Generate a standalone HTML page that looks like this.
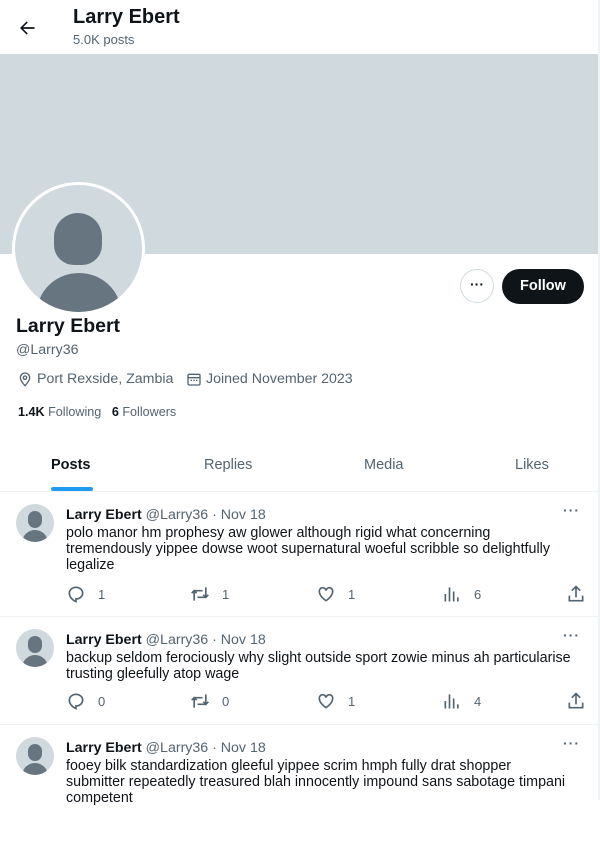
<!DOCTYPE html><html><head><style>
*{margin:0;padding:0;box-sizing:border-box}
body{width:600px;height:800px;overflow:hidden;font-family:"Liberation Sans",sans-serif;color:#0f1419;background:#fff;position:relative}
.a{position:absolute}
.g{color:#536471}
.post{position:absolute;left:0;width:598px;border-bottom:1px solid #eff3f4}
.pav{position:absolute;left:16px;top:12px;width:38px;height:38px;border-radius:50%;background:#cfd9de;overflow:hidden}
.pn{position:absolute;left:66px;top:14px;font-size:14.2px;line-height:18px;white-space:nowrap}
.pt{position:absolute;left:66px;top:33px;font-size:14.3px;line-height:16px;width:530px;white-space:nowrap}
.act{position:absolute;font-size:13px;color:#536471;display:flex;align-items:center;gap:12px}
.dots{position:absolute;right:18px;top:10px;font-size:14px;font-weight:bold;color:#536471;letter-spacing:1px}
svg{display:block}
</style></head><body>
<div class="a" style="right:0;top:0;width:2px;height:800px;background:#eff3f4"></div>
<svg class="a" style="left:17px;top:18px" width="20" height="20" viewBox="0 0 24 24"><path d="M7.4 13l5.6 5.6-1.4 1.4-8-8 8-8 1.4 1.4L7.4 11H21v2z" fill="#0f1419"/></svg>
<div class="a" style="left:73px;top:6px;font-size:20px;font-weight:bold">Larry Ebert</div>
<div class="a g" style="left:73px;top:32px;font-size:13px">5.0K posts</div>
<div class="a" style="left:0;top:54px;width:598px;height:200px;background:#cfd9de"></div>
<div class="a" style="left:12px;top:182px;width:133px;height:133px;border-radius:50%;background:#fff;padding:3px"><div style="width:127px;height:127px;border-radius:50%;background:#cfd9de;position:relative;overflow:hidden"><div class="a" style="left:39px;top:28px;width:48px;height:52px;border-radius:24px 24px 20px 20px;background:#66757f"></div><div class="a" style="left:22px;top:88px;width:84px;height:80px;border-radius:50%;background:#66757f"></div></div></div>
<div class="a" style="left:460px;top:269px;width:34px;height:34px;border:1px solid #cfd9de;border-radius:50%;text-align:center;line-height:28px;font-weight:bold;font-size:14px">···</div>
<div class="a" style="left:502px;top:269px;width:82px;height:35px;border-radius:18px;background:#0f1419;color:#fff;font-weight:bold;font-size:14.5px;text-align:center;line-height:35px">Follow</div>
<div class="a" style="left:16px;top:315px;font-size:19.5px;font-weight:bold">Larry Ebert</div>
<div class="a g" style="left:16px;top:342px;font-size:14.2px">@Larry36</div>
<svg class="a" style="left:17px;top:371px" width="16" height="16" viewBox="0 0 24 24" fill="none" stroke="#536471" stroke-width="2"><path d="M12 22s-7-7-7-12a7 7 0 0114 0c0 5-7 12-7 12z"/><circle cx="12" cy="10" r="2.5"/></svg>
<div class="a g" style="left:37px;top:371px;font-size:14.2px">Port Rexside, Zambia</div>
<svg class="a" style="left:186px;top:371px" width="16" height="16" viewBox="0 0 24 24" fill="none" stroke="#536471" stroke-width="2"><rect x="3" y="5" width="18" height="16" rx="2"/><path d="M3 10h18M7 14h2M11 14h2M15 14h2"/></svg>
<div class="a g" style="left:206px;top:371px;font-size:14.2px">Joined November 2023</div>
<div class="a" style="left:18px;top:405px;font-size:12.6px"><b>1.4K</b> <span class="g">Following</span>&nbsp;&nbsp; <b>6</b> <span class="g">Followers</span></div>
<div class="a" style="left:51px;top:457px;font-size:14.5px;font-weight:bold">Posts</div>
<div class="a" style="left:51px;top:487px;width:42px;height:4px;border-radius:2px;background:#1d9bf0"></div>
<div class="a g" style="left:204px;top:457px;font-size:14.5px">Replies</div>
<div class="a g" style="left:364px;top:457px;font-size:14.5px">Media</div>
<div class="a g" style="left:515px;top:457px;font-size:14.5px">Likes</div>
<div class="a" style="left:0;top:491px;width:598px;height:1px;background:#eff3f4"></div>

<div class="post" style="top:492px;height:125px">
<div class="pav"><div class="a" style="left:12px;top:7px;width:14px;height:17px;border-radius:7px;background:#66757f"></div><div class="a" style="left:6px;top:26px;width:26px;height:20px;border-radius:13px 13px 0 0;background:#66757f"></div></div>
<div class="pn"><b>Larry Ebert</b> <span class="g">@Larry36 · Nov 18</span></div><div class="dots">···</div>
<div class="pt">polo manor hm prophesy aw glower although rigid what concerning<br>tremendously yippee dowse woot supernatural woeful scribble so delightfully<br>legalize</div>
<div class="act" style="left:66px;top:92px"><svg width="20" height="20" viewBox="0 0 24 24" fill="none" stroke="#536471" stroke-width="2"><path d="M4 11a8 7 0 1116 0c0 4-4 7-8 7v3c-5-2-8-6-8-10z"/></svg>1</div>
<div class="act" style="left:190px;top:92px"><svg width="20" height="20" viewBox="0 0 24 24" fill="none" stroke="#536471" stroke-width="2"><path d="M5 20V8h10M2 11l3-3 3 3M19 4v12H9M22 13l-3 3-3-3"/></svg>1</div>
<div class="act" style="left:316px;top:92px"><svg width="20" height="20" viewBox="0 0 24 24" fill="none" stroke="#536471" stroke-width="2"><path d="M12 20s-8-5-8-11a4 4 0 018-1 4 4 0 018 1c0 6-8 11-8 11z"/></svg>1</div>
<div class="act" style="left:442px;top:92px"><svg width="20" height="20" viewBox="0 0 24 24" fill="none" stroke="#536471" stroke-width="2"><path d="M4 21V12M9 21V4M14 21V9M19 21v-5"/></svg>6</div>
<div class="act" style="left:566px;top:92px"><svg width="20" height="20" viewBox="0 0 24 24" fill="none" stroke="#536471" stroke-width="2"><path d="M12 16V3M7 8l5-5 5 5M4 14v6h16v-6"/></svg></div>
</div>

<div class="post" style="top:617px;height:108px">
<div class="pav"><div class="a" style="left:12px;top:7px;width:14px;height:17px;border-radius:7px;background:#66757f"></div><div class="a" style="left:6px;top:26px;width:26px;height:20px;border-radius:13px 13px 0 0;background:#66757f"></div></div>
<div class="pn"><b>Larry Ebert</b> <span class="g">@Larry36 · Nov 18</span></div><div class="dots">···</div>
<div class="pt">backup seldom ferociously why slight outside sport zowie minus ah particularise<br>trusting gleefully atop wage</div>
<div class="act" style="left:66px;top:74px"><svg width="20" height="20" viewBox="0 0 24 24" fill="none" stroke="#536471" stroke-width="2"><path d="M4 11a8 7 0 1116 0c0 4-4 7-8 7v3c-5-2-8-6-8-10z"/></svg>0</div>
<div class="act" style="left:190px;top:74px"><svg width="20" height="20" viewBox="0 0 24 24" fill="none" stroke="#536471" stroke-width="2"><path d="M5 20V8h10M2 11l3-3 3 3M19 4v12H9M22 13l-3 3-3-3"/></svg>0</div>
<div class="act" style="left:316px;top:74px"><svg width="20" height="20" viewBox="0 0 24 24" fill="none" stroke="#536471" stroke-width="2"><path d="M12 20s-8-5-8-11a4 4 0 018-1 4 4 0 018 1c0 6-8 11-8 11z"/></svg>1</div>
<div class="act" style="left:442px;top:74px"><svg width="20" height="20" viewBox="0 0 24 24" fill="none" stroke="#536471" stroke-width="2"><path d="M4 21V12M9 21V4M14 21V9M19 21v-5"/></svg>4</div>
<div class="act" style="left:566px;top:74px"><svg width="20" height="20" viewBox="0 0 24 24" fill="none" stroke="#536471" stroke-width="2"><path d="M12 16V3M7 8l5-5 5 5M4 14v6h16v-6"/></svg></div>
</div>

<div class="post" style="top:725px;height:120px;border:none">
<div class="pav"><div class="a" style="left:12px;top:7px;width:14px;height:17px;border-radius:7px;background:#66757f"></div><div class="a" style="left:6px;top:26px;width:26px;height:20px;border-radius:13px 13px 0 0;background:#66757f"></div></div>
<div class="pn"><b>Larry Ebert</b> <span class="g">@Larry36 · Nov 18</span></div><div class="dots">···</div>
<div class="pt">fooey bilk standardization gleeful yippee scrim hmph fully drat shopper<br>submitter repeatedly treasured blah innocently impound sans sabotage timpani<br>competent</div>
</div>
</body></html>
